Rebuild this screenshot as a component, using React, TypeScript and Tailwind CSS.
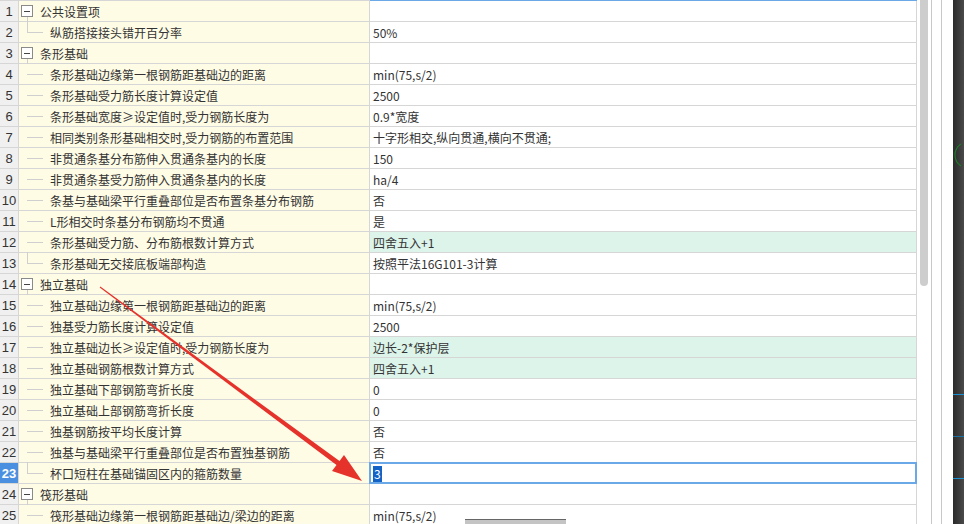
import React from "react";

type Row = {
  n: number;
  label: string;
  value?: string;
  group?: boolean;
  last?: boolean;
  green?: boolean;
  selected?: boolean;
};

const rows: Row[] = [
  { n: 1, label: "公共设置项", group: true },
  { n: 2, label: "纵筋搭接接头错开百分率", value: "50%", last: true },
  { n: 3, label: "条形基础", group: true },
  { n: 4, label: "条形基础边缘第一根钢筋距基础边的距离", value: "min(75,s/2)" },
  { n: 5, label: "条形基础受力筋长度计算设定值", value: "2500" },
  { n: 6, label: "条形基础宽度≥设定值时,受力钢筋长度为", value: "0.9*宽度" },
  { n: 7, label: "相同类别条形基础相交时,受力钢筋的布置范围", value: "十字形相交,纵向贯通,横向不贯通;" },
  { n: 8, label: "非贯通条基分布筋伸入贯通条基内的长度", value: "150" },
  { n: 9, label: "非贯通条基受力筋伸入贯通条基内的长度", value: "ha/4" },
  { n: 10, label: "条基与基础梁平行重叠部位是否布置条基分布钢筋", value: "否" },
  { n: 11, label: "L形相交时条基分布钢筋均不贯通", value: "是" },
  { n: 12, label: "条形基础受力筋、分布筋根数计算方式", value: "四舍五入+1", green: true },
  { n: 13, label: "条形基础无交接底板端部构造", value: "按照平法16G101-3计算", last: true },
  { n: 14, label: "独立基础", group: true },
  { n: 15, label: "独立基础边缘第一根钢筋距基础边的距离", value: "min(75,s/2)" },
  { n: 16, label: "独基受力筋长度计算设定值", value: "2500" },
  { n: 17, label: "独立基础边长≥设定值时,受力钢筋长度为", value: "边长-2*保护层", green: true },
  { n: 18, label: "独立基础钢筋根数计算方式", value: "四舍五入+1", green: true },
  { n: 19, label: "独立基础下部钢筋弯折长度", value: "0" },
  { n: 20, label: "独立基础上部钢筋弯折长度", value: "0" },
  { n: 21, label: "独基钢筋按平均长度计算", value: "否" },
  { n: 22, label: "独基与基础梁平行重叠部位是否布置独基钢筋", value: "否" },
  { n: 23, label: "杯口短柱在基础锚固区内的箍筋数量", value: "3", last: true, selected: true },
  { n: 24, label: "筏形基础", group: true },
  { n: 25, label: "筏形基础边缘第一根钢筋距基础边/梁边的距离", value: "min(75,s/2)" },
];

const cjk = { fontFamily: '"Noto Sans CJK SC", "Noto Sans", sans-serif' };
const num = { fontFamily: '"Liberation Sans", Arial, sans-serif' };

function RowView({ r, first }: { r: Row; first: boolean }) {
  const h = first ? "h-[22px]" : "h-[21px]";
  return (
    <div className={`flex ${h} border-b border-[#d6d6d6]`}>
      <div
        className={`w-[19px] shrink-0 border-r border-[#d6d6d6] flex items-center justify-center text-[13px] ${
          r.selected ? "bg-[#4a8fe0] text-white font-bold" : "bg-[#f0f0f0] text-[#333]"
        }`}
        style={num}
      >
        <span className="relative top-[1px]">{r.n}</span>
      </div>
      <div className="w-[351px] shrink-0 border-r border-[#d6d6d6] bg-[#fffce6] relative flex items-center text-[12px] text-[#333]" style={cjk}>
        {r.group ? (
          <>
            <div className="absolute left-[2px] top-1/2 -translate-y-1/2 w-[12px] h-[12px] border border-[#8a8a8a] bg-white flex items-center justify-center">
              <div className="w-[6px] h-px bg-[#444]" />
            </div>
            <div className="absolute left-[8px] top-[calc(50%+6px)] bottom-[-1px] w-px bg-[#cfcfcf]" />
            <span className="pl-[21px] leading-[20px] relative top-[1px]">{r.label}</span>
          </>
        ) : (
          <>
            {r.last && <div className="absolute left-[8px] top-[-1px] w-px bg-[#cfcfcf] h-[calc(50%+1px)]" />}
            <div className="absolute left-[8px] top-1/2 w-[16px] h-px bg-[#cfcfcf]" />
            <span className="pl-[31px] leading-[20px] whitespace-nowrap relative top-[1px]">{r.label}</span>
          </>
        )}
      </div>
      <div
        className={`w-[547px] shrink-0 border-r border-[#d6d6d6] relative flex items-center text-[12px] text-[#333] ${
          r.green ? "bg-[#dcf4ea]" : "bg-white"
        }`}
        style={cjk}
      >
        {r.selected ? (
          <>
            <div className="absolute left-[-1px] top-[-1px] right-[-1px] bottom-[-1px] border-2 border-[#6aa8e8]" />
            <span className="ml-[3px] bg-[#1363c6] text-white leading-[16px] px-px relative top-[1px]">{r.value}</span>
          </>
        ) : (
          <span className="pl-[3px] leading-[20px] whitespace-nowrap relative top-[1px]">{r.value}</span>
        )}
      </div>
    </div>
  );
}

export default function App() {
  return (
    <div className="w-[964px] h-[524px] overflow-hidden bg-white flex relative">
      <div className="w-[917px] shrink-0 flex flex-col">
        <div className="flex h-px shrink-0">
          <div className="w-[370px] bg-[#d6d6d6]" />
          <div className="w-[547px] bg-[#6aa8e8]" />
        </div>
        {rows.map((r, i) => (
          <RowView key={r.n} r={r} first={i === 0} />
        ))}
      </div>
      <div className="w-[3px] shrink-0" />
      <div className="w-[8px] shrink-0 flex flex-col">
        <div className="h-[286px] bg-[#cdcdcd] rounded-b-[4px]" />
      </div>
      <div className="w-[3px] shrink-0" />
      <div className="w-px shrink-0 bg-[#c8c8c8]" />
      <div className="w-[9px] shrink-0" />
      <div className="w-px shrink-0 bg-[#c8c8c8]" />
      <div className="w-[11px] shrink-0" />
      <div className="w-[11px] shrink-0 relative bg-gradient-to-r from-[#2b2b2b] to-[#4a4a4a]">
        <svg className="absolute left-0 top-[140px]" width="11" height="30" viewBox="0 0 11 30">
          <path d="M8 4 Q2 8 2 15 Q2 22 8 26" stroke="#1f7a2a" strokeWidth="1.2" fill="none" />
        </svg>
        <div className="absolute left-0 right-0 top-[394px] h-px bg-[#1b8fd0]" />
        <div className="absolute left-0 right-0 top-[436px] h-px bg-[#1b6fa0]" />
        <div className="absolute left-0 right-0 top-[478px] h-px bg-[#1b8fd0]" />
      </div>

      <div className="absolute left-[465px] top-[519px] w-[101px] h-[5px] bg-[#c4c4c4] border-t border-[#666]" />

      <svg className="absolute left-0 top-0 pointer-events-none" width="964" height="524" viewBox="0 0 964 524">
        <polygon
          points="100.3,286.6 339.5,461.1 344,455.1 362,481 332,471.1 336.5,465.1 99.7,287.4"
          fill="#e5322b"
        />
      </svg>
    </div>
  );
}
